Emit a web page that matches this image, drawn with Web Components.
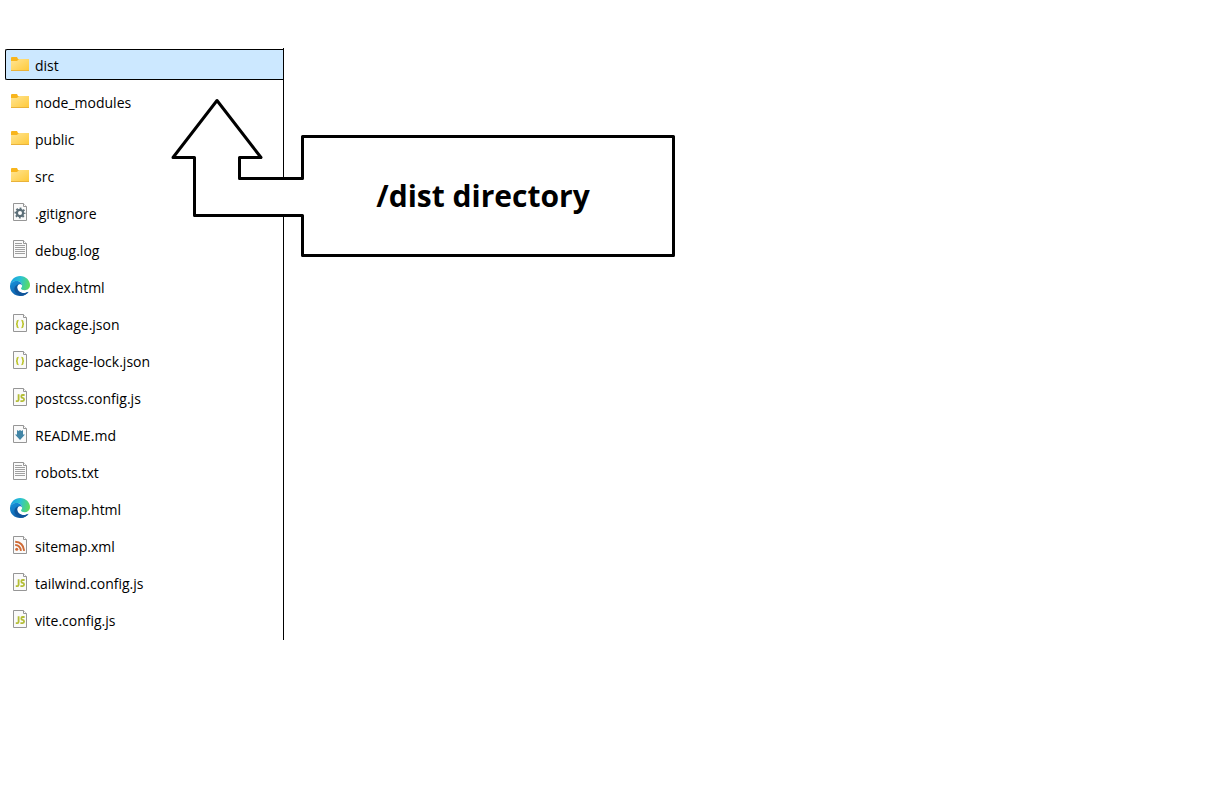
<!DOCTYPE html>
<html lang="en">
<head>
<meta charset="utf-8">
<meta name="viewport" content="width=device-width, initial-scale=1">
<title>Project directory</title>
<style>
  body { margin: 0; background: #fff; color: #000; font-family: "Segoe UI", "Open Sans", "Noto Sans", sans-serif; }
</style>
</head>
<body>
<directory-page>
  <file-list>
    <file-row kind="folder" selected>dist</file-row>
    <file-row kind="folder">node_modules</file-row>
    <file-row kind="folder">public</file-row>
    <file-row kind="folder">src</file-row>
    <file-row kind="gear">.gitignore</file-row>
    <file-row kind="text">debug.log</file-row>
    <file-row kind="edge">index.html</file-row>
    <file-row kind="json">package.json</file-row>
    <file-row kind="json">package-lock.json</file-row>
    <file-row kind="js">postcss.config.js</file-row>
    <file-row kind="md">README.md</file-row>
    <file-row kind="text">robots.txt</file-row>
    <file-row kind="edge">sitemap.html</file-row>
    <file-row kind="feed">sitemap.xml</file-row>
    <file-row kind="js">tailwind.config.js</file-row>
    <file-row kind="js">vite.config.js</file-row>
  </file-list>
  <arrow-callout slot="note">/dist directory</arrow-callout>
</directory-page>

<script>
const sheet = inner => `
  <path d="M3.5 1.5h10l3 3v14h-13z" fill="#fafafa" stroke="#969696"/>
  <path d="M13.5 1.5v3h3" fill="#fff" stroke="#969696"/>${inner}`;

const ICONS = {
  folder: `<defs><linearGradient id="f" x1="0" y1="0" x2="1" y2="1"><stop offset="0" stop-color="#ffe594"/><stop offset="1" stop-color="#ffc937"/></linearGradient></defs>
    <path d="M1 4q0-1 1-1h5l1 2h10q1 0 1 1v10H1z" fill="#f8b51c"/>
    <path d="M1 7h6l2-2h10v11q0 1-1 1H2q-1 0-1-1z" fill="url(#f)"/>
    <path d="M1 16.5h18" stroke="#e9b23a"/>`,
  gear: sheet(`<circle cx="10" cy="11" r="3.1" fill="#fff" stroke="#5c6f78" stroke-width="2.2"/>
    <circle cx="10" cy="11" r="4.6" fill="none" stroke="#5c6f78" stroke-width="1.8" stroke-dasharray="1.806 1.806" stroke-dashoffset=".9"/>`),
  text: sheet(`<path d="M5 4.5h7M5 6.5h10M5 8.5h10M5 10.5h10M5 12.5h10M5 14.5h10" stroke="#a0a0a0"/>`),
  edge: `<defs>
      <linearGradient id="g" x1="0" y1=".3" x2="1" y2=".5"><stop offset="0" stop-color="#1b9de2"/><stop offset=".5" stop-color="#2bc3d2"/><stop offset="1" stop-color="#5fdc5c"/></linearGradient>
      <linearGradient id="b" x1="0" y1="0" x2=".6" y2="1"><stop offset="0" stop-color="#1793dc"/><stop offset="1" stop-color="#0c59a4"/></linearGradient>
    </defs>
    <path d="M0 9.5C.7 3.7 4.9 0 10 0c6 0 10 4.4 10 9 0 3.2-2.4 5.2-5.2 5.2-2.4 0-3.8-.9-3.8-1.7 0-.6 1.1-1 1.1-2.7C12.1 7 9.7 5 6.5 5 3.3 5 .8 6.8 0 9.5z" fill="url(#g)"/>
    <path d="M0 10C.2 7 3 5 6.500 5c3.200 0 5.600 2 5.600 4.600C11.500 8.500 10.500 8 9.300 8.300 7.500 8.900 7 10.500 7.200 12c.5 3.500 3.500 5 6.600 5 2 0 3.700-.7 4.800-1.300C17 18.300 13.800 20 10.200 20 4.300 20-.2 15.600 0 10z" fill="url(#b)"/>
    <path d="M7.600 8.400C5.300 9.500 4.200 11.400 4.400 13.500c.3 3.400 3.300 5.800 7 6.300 3.200-.2 5.800-1.900 7.200-4.100-1.100.6-2.800 1.300-4.800 1.300-3.100 0-6.100-1.500-6.600-5-.2-1.500.3-3.100 2.100-3.700z" fill="#10559a"/>`,
  json: sheet(`<g fill="none" stroke="#bcc52f" stroke-width="1.6"><path d="M8.600 7.500q-1.400 0-1.400 1.300v1q0 1.200-1.200 1.200 1.200 0 1.200 1.200v1q0 1.300 1.400 1.300"/><path d="M11.400 7.500q1.400 0 1.400 1.300v1q0 1.200 1.200 1.200-1.200 0-1.200 1.200v1q0 1.300-1.400 1.300"/></g>`),
  js: sheet(`<g fill="none" stroke="#b3bd35" stroke-width="1.8"><path d="M8.600 7.200v5.500q0 1.400-1.400 1.400H5.800"/><path d="M14.600 8h-2q-1.300 0-1.300 1.400t1.300 1.500q1.500.2 1.500 1.700t-1.500 1.500h-2.200"/></g>`),
  md: sheet(`<path d="M7 6l1.500 1L10 6l1.500 1L13 6v4.500h2L10 16l-5-5.500h2z" fill="#4285a6"/>`),
  feed: sheet(`<circle cx="6.700" cy="14.300" r="1.500" fill="#cf6a35"/><path d="M5.200 10q4.800 0 5.800 5.800M5.200 6.700q8 .3 9 9.100" fill="none" stroke="#cf6a35" stroke-width="1.900"/>`)
};

customElements.define('directory-page', class extends HTMLElement {
  constructor() {
    super();
    this.attachShadow({ mode: 'open' }).innerHTML = `
      <style>
        :host { display: block; }
        main { position: relative; padding: 48px 5px; }
        ::slotted([slot="note"]) { position: absolute; left: 171px; top: 98px; }
      </style>
      <main><slot></slot><slot name="note"></slot></main>`;
  }
});

customElements.define('file-list', class extends HTMLElement {
  constructor() {
    super();
    this.attachShadow({ mode: 'open' }).innerHTML = `
      <style>
        :host { display: flex; flex-direction: column; gap: 6px; box-sizing: border-box; width: 279px; max-width: 100%;
                padding: 1px 0 5px; border-right: 1px solid #000; }
      </style>
      <slot></slot>`;
    this.attachInternals().role = 'list';
  }
});

customElements.define('file-row', class extends HTMLElement {
  constructor() {
    super();
    this.attachShadow({ mode: 'open' }).innerHTML = `
      <style>
        :host { display: flex; align-items: flex-start; gap: 5px; padding: 4px 4px 2px; border: 1px solid transparent;
                font-size: 14px; line-height: 23px; white-space: nowrap; }
        :host([selected]) { background: #cce8ff; border-color: #000; border-right-width: 0; border-radius: 2px 0 0 2px; }
        svg { flex: none; width: 20px; height: 20px; }
      </style>
      <svg viewBox="0 0 20 20" aria-hidden="true"></svg>
      <span><slot></slot></span>`;
    this.attachInternals().role = 'listitem';
  }
  connectedCallback() {
    this.shadowRoot.querySelector('svg').innerHTML = ICONS[this.getAttribute('kind')];
  }
});

customElements.define('arrow-callout', class extends HTMLElement {
  constructor() {
    super();
    this.attachShadow({ mode: 'open' }).innerHTML = `
      <style>
        :host { display: grid; }
        svg, strong { grid-area: 1 / 1; }
        svg { width: 506px; height: 162px; }
        strong { padding: 76px 24px 38px 142px; text-align: center; font-size: 30px; line-height: 44px; font-weight: 700; }
      </style>
      <svg viewBox="0 0 506 162" aria-hidden="true">
        <path d="M46 2.500L90 59.500H68.500V80.500H131.500V38.500H502.500V157.500H131.500V117.500H23.500V59.500H2z" fill="#fff" stroke="#000" stroke-width="3" stroke-linejoin="round"/>
      </svg>
      <strong><slot></slot></strong>`;
  }
});
</script>
</body>
</html>
